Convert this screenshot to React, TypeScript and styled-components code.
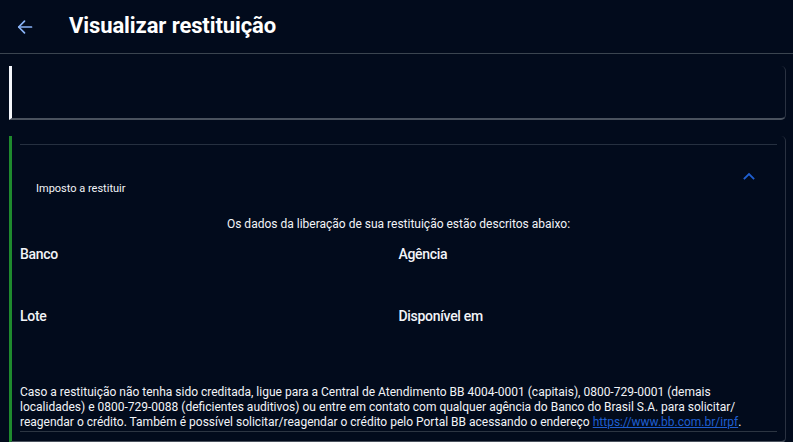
import React from "react";
import styled, { createGlobalStyle } from "styled-components";

const Global = createGlobalStyle`
  html, body { margin: 0; padding: 0; background: #020b1c; }
  body { font-family: Roboto, "Liberation Sans", Arial, sans-serif; color: #f2f4f8; }
  * { box-sizing: border-box; }
`;

const Page = styled.div`
  width: 793px;
  height: 442px;
  background: #020b1c;
  overflow: hidden;
`;

const Header = styled.header`
  height: 54px;
  display: flex;
  align-items: center;
  padding-left: 17px;
  border-bottom: 1px solid #3b4550;
`;

const BackButton = styled.button`
  background: none;
  border: 0;
  padding: 0;
  width: 16px;
  height: 16px;
  display: flex;
  color: #8ab4f8;
  cursor: pointer;
`;

const Title = styled.h1`
  margin: 0 0 0 36px;
  font-size: 22px;
  font-weight: 700;
  color: #ffffff;
  letter-spacing: -0.1px;
  line-height: 1;
  position: relative;
  top: -1px;
`;

const Main = styled.main`
  padding: 12px 7px 0 9px;
  display: flex;
  flex-direction: column;
  gap: 16px;
`;

const Card = styled.section<{ $accent: string }>`
  border-left: 3px solid ${(p) => p.$accent};
  border-right: 1px solid #2a3241;
  border-bottom: 2px solid #4a525e;
  border-radius: 0 5px 5px 0;
`;

const EmptyCard = styled(Card)`
  height: 54px;
`;

const Body = styled.div`
  padding: 8px 8px 9px 8px;
`;

const Divider = styled.hr`
  margin: 0;
  border: 0;
  border-top: 1px solid #263040;
`;

const PanelHeader = styled.div`
  display: flex;
  justify-content: space-between;
  padding: 26px 21px 0 16px;
  height: 66px;
`;

const PanelTitle = styled.span`
  font-size: 11px;
  color: #f2f4f8;
  margin-top: 11px;
`;

const Chevron = styled.button`
  background: none;
  border: 0;
  padding: 0;
  width: 14px;
  height: 10px;
  display: flex;
  color: #1f5fd1;
  cursor: pointer;
`;

const Intro = styled.p`
  margin: 5px 0 0;
  text-align: center;
  font-size: 12px;
  line-height: 16px;
  color: #f2f4f8;
`;

const Fields = styled.div`
  display: grid;
  grid-template-columns: 1fr 1fr;
  grid-auto-rows: 62px;
  margin-top: 14px;
`;

const FieldLabel = styled.span`
  font-size: 14px;
  font-weight: 500;
  letter-spacing: -0.3px;
  color: #f2f4f8;
  line-height: 16px;
`;

const Note = styled.p`
  margin: 15px 0 0;
  font-size: 12px;
  line-height: 15px;
  color: #f2f4f8;
  padding-bottom: 1px;
  border-bottom: 1px solid #2c3542;
`;

const Link = styled.a`
  color: #1f5fd1;
  text-decoration: underline;
`;

export default function App() {
  return (
    <Page>
      <Global />
      <Header>
        <BackButton aria-label="Voltar">
          <svg width="16" height="16" viewBox="0 0 16 16" fill="none" stroke="currentColor" strokeWidth="1.7" strokeLinecap="round" strokeLinejoin="round">
            <path d="M14.5 8H1.8" />
            <path d="M7.5 2.2L1.7 8l5.8 5.8" />
          </svg>
        </BackButton>
        <Title>Visualizar restituição</Title>
      </Header>
      <Main>
        <EmptyCard $accent="#f4f6fb" />
        <Card $accent="#1f8a2e">
          <Body>
            <Divider />
            <PanelHeader>
              <PanelTitle>Imposto a restituir</PanelTitle>
              <Chevron aria-label="Recolher">
                <svg width="14" height="10" viewBox="0 0 14 10" fill="none" stroke="currentColor" strokeWidth="1.8" strokeLinecap="square">
                  <path d="M2.5 7.5L7 3l4.5 4.5" />
                </svg>
              </Chevron>
            </PanelHeader>
            <Intro>Os dados da liberação de sua restituição estão descritos abaixo:</Intro>
            <Fields>
              <FieldLabel>Banco</FieldLabel>
              <FieldLabel>Agência</FieldLabel>
              <FieldLabel>Lote</FieldLabel>
              <FieldLabel>Disponível em</FieldLabel>
            </Fields>
            <Note>
              Caso a restituição não tenha sido creditada, ligue para a Central de Atendimento BB 4004-0001 (capitais), 0800-729-0001 (demais localidades) e 0800-729-0088 (deficientes auditivos) ou entre em contato com qualquer agência do Banco do Brasil S.A. para solicitar/ reagendar o crédito. Também é possível solicitar/reagendar o crédito pelo Portal BB acessando o endereço{" "}
              <Link href="#">https://www.bb.com.br/irpf</Link>.
            </Note>
          </Body>
        </Card>
      </Main>
    </Page>
  );
}
